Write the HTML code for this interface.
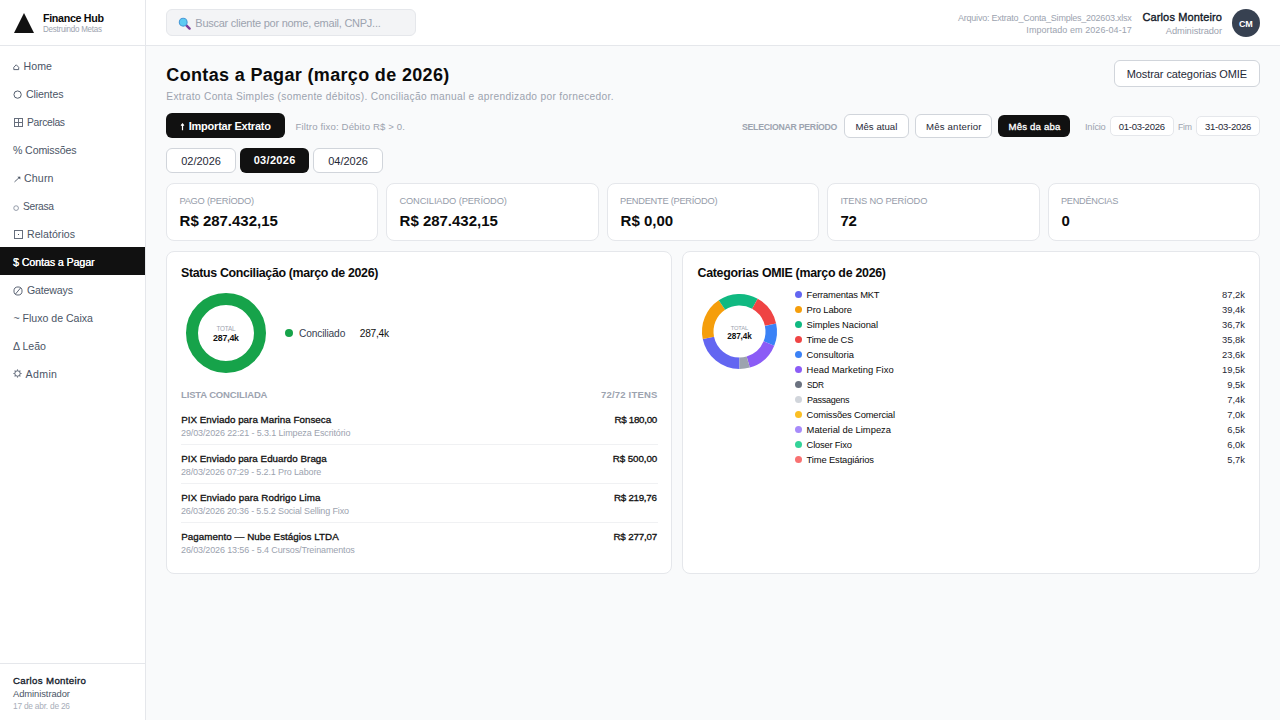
<!DOCTYPE html>
<html lang="pt-BR"><head><meta charset="utf-8"><title>Finance Hub</title>
<style>
html,body{margin:0;padding:0}
body{width:1280px;height:720px;overflow:hidden;background:#f9fafb;font-family:"Liberation Sans", sans-serif;position:relative;-webkit-font-smoothing:antialiased}
.b{position:absolute;box-sizing:border-box}
.t{position:absolute;white-space:nowrap;line-height:1.2;margin:0;padding:0}
svg{position:absolute;overflow:visible}
</style></head><body>
<div class="b" style="left:0px;top:0px;width:145px;height:720px;background:#fff;"></div>
<div class="b" style="left:146px;top:0px;width:1134px;height:45px;background:#fff;"></div>
<div class="b" style="left:145px;top:0px;width:1px;height:720px;background:#e5e7eb;"></div>
<div class="b" style="left:0px;top:45px;width:1280px;height:1px;background:#e5e7eb;"></div>
<div class="b" style="left:0px;top:663px;width:145px;height:1px;background:#e5e7eb;"></div>
<svg style="left:14px;top:13px" width="20" height="20" viewBox="0 0 20 20"><path d="M10 0 L20 20 L0 20 Z" fill="#111"/></svg>
<div class="b" style="left:0px;top:247px;width:145px;height:28px;background:#111;"></div>
<svg style="left:13px;top:63.6px" width="7" height="7" viewBox="0 0 7 7" fill="none" stroke="#4b5566" stroke-width="1"><path d="M0.8 5.6 V3.3 L3.25 0.8 L5.7 3.3 V5.6 Z" stroke-width="0.9"/></svg>
<svg style="left:13px;top:89.7px" width="10" height="10" viewBox="0 0 10 10" fill="none" stroke="#4b5566" stroke-width="1"><circle cx="4.6" cy="4.6" r="3.65" stroke-width="0.95"/></svg>
<svg style="left:14px;top:118px" width="9" height="9" viewBox="0 0 9 9" fill="none" stroke="#666e7c" stroke-width="1" shape-rendering="crispEdges"><rect x="0.5" y="0.5" width="8" height="8"/><path d="M4.5 0V9M0 4.5H9"/></svg>
<svg style="left:13.5px;top:175.8px" width="7" height="7" viewBox="0 0 7 7" fill="none" stroke="#4b5566" stroke-width="1"><path d="M0.5 5.9 L5.6 1.2" stroke-width="0.9"/><path d="M3.4 0.7 H6.3 V3.6 Z" fill="#4b5563" stroke="none"/></svg>
<svg style="left:13px;top:204.5px" width="7" height="7" viewBox="0 0 7 7" fill="none" stroke="#7b8494" stroke-width="1"><circle cx="3.1" cy="3.1" r="2.35" stroke-width="0.8"/></svg>
<svg style="left:14px;top:230px" width="9" height="9" viewBox="0 0 9 9" fill="none" stroke="#666e7c" stroke-width="1" shape-rendering="crispEdges"><rect x="0.5" y="0.5" width="8" height="8"/><rect x="4" y="4" width="1" height="1" fill="#4b5563" stroke="none"/></svg>
<svg style="left:13.4px;top:285.6px" width="10" height="10" viewBox="0 0 10 10" fill="none" stroke="#4b5566" stroke-width="1"><circle cx="5" cy="5" r="4.05" stroke-width="0.9"/><path d="M2.5 8 L7.5 2" stroke-width="0.9"/></svg>
<svg style="left:13.2px;top:369.3px" width="9" height="9" viewBox="0 0 9 9" fill="none" stroke="#4b5566" stroke-width="1"><circle cx="4.5" cy="4.5" r="2.7" stroke-width="0.9"/><path d="M7.50 4.50L8.50 4.50M6.62 6.62L7.33 7.33M4.50 7.50L4.50 8.50M2.38 6.62L1.67 7.33M1.50 4.50L0.50 4.50M2.38 2.38L1.67 1.67M4.50 1.50L4.50 0.50M6.62 2.38L7.33 1.67" stroke-width="1.1"/></svg>
<div class="b" style="left:166px;top:9px;width:250px;height:27px;background:#f3f4f6;border:1px solid #e5e7eb;border-radius:6px;"></div>
<svg style="left:178.4px;top:16.8px" width="13" height="13" viewBox="0 0 13 13"><path d="M7.6 7.6 L11.6 11.6" stroke="#7d3c98" stroke-width="2.4" stroke-linecap="round"/><circle cx="5.2" cy="5.2" r="3.9" fill="#5ecbf2" stroke="#4a9ad8" stroke-width="1.1"/></svg>
<div class="b" style="left:1232px;top:9px;width:28px;height:28px;background:#374151;border-radius:14px;"></div>
<div class="b" style="left:1114px;top:60px;width:146px;height:27px;background:#fff;border:1px solid #d1d5db;border-radius:6px;"></div>
<div class="b" style="left:166px;top:113px;width:119px;height:25px;background:#111;border-radius:6px;"></div>
<svg style="left:180.2px;top:122.8px" width="5" height="8" viewBox="0 0 5 8"><path d="M2.5 7.3 V1 M1.1 2.7 L2.5 0.9 L3.9 2.7" fill="none" stroke="#fff" stroke-width="1.2"/></svg>
<div class="b" style="left:844px;top:114px;width:64.5px;height:24px;background:#fff;border:1px solid #d1d5db;border-radius:6px;"></div>
<div class="b" style="left:915px;top:114px;width:77px;height:24px;background:#fff;border:1px solid #d1d5db;border-radius:6px;"></div>
<div class="b" style="left:998px;top:115px;width:72px;height:22px;background:#111;border-radius:6px;"></div>
<div class="b" style="left:1110px;top:116px;width:63.5px;height:20px;background:#fff;border:1px solid #e5e7eb;border-radius:5px;"></div>
<div class="b" style="left:1196px;top:116px;width:63.5px;height:20px;background:#fff;border:1px solid #e5e7eb;border-radius:5px;"></div>
<div class="b" style="left:166px;top:148px;width:70px;height:25px;background:#fff;border:1px solid #d1d5db;border-radius:6px;"></div>
<div class="b" style="left:240px;top:148px;width:69px;height:25px;background:#111;border-radius:6px;"></div>
<div class="b" style="left:313px;top:148px;width:70px;height:25px;background:#fff;border:1px solid #d1d5db;border-radius:6px;"></div>
<div class="b" style="left:166px;top:183px;width:212px;height:58px;background:#fff;border:1px solid #e5e7eb;border-radius:8px;"></div>
<div class="b" style="left:386px;top:183px;width:213px;height:58px;background:#fff;border:1px solid #e5e7eb;border-radius:8px;"></div>
<div class="b" style="left:607px;top:183px;width:212px;height:58px;background:#fff;border:1px solid #e5e7eb;border-radius:8px;"></div>
<div class="b" style="left:827px;top:183px;width:213px;height:58px;background:#fff;border:1px solid #e5e7eb;border-radius:8px;"></div>
<div class="b" style="left:1048px;top:183px;width:212px;height:58px;background:#fff;border:1px solid #e5e7eb;border-radius:8px;"></div>
<div class="b" style="left:166px;top:251px;width:506px;height:323px;background:#fff;border:1px solid #e5e7eb;border-radius:8px;"></div>
<div class="b" style="left:682px;top:251px;width:578px;height:323px;background:#fff;border:1px solid #e5e7eb;border-radius:8px;"></div>
<svg style="left:186px;top:293px" width="80" height="80" viewBox="0 0 80 80"><circle cx="40" cy="40" r="34" fill="none" stroke="#16a34a" stroke-width="12"/><text x="40" y="38" text-anchor="middle" font-family="Liberation Sans, sans-serif" font-size="6.3" textLength="19" fill="#9ca3af">TOTAL</text><text x="40" y="48" text-anchor="middle" font-family="Liberation Sans, sans-serif" font-size="8.8" textLength="26" font-weight="700" fill="#111">287,4k</text></svg>
<div class="b" style="left:285px;top:329px;width:8px;height:8px;background:#16a34a;border-radius:4px;"></div>
<div class="b" style="left:181px;top:444px;width:476.5px;height:1px;background:#f0f1f3;"></div>
<div class="b" style="left:181px;top:483px;width:476.5px;height:1px;background:#f0f1f3;"></div>
<div class="b" style="left:181px;top:522px;width:476.5px;height:1px;background:#f0f1f3;"></div>
<svg style="left:702.3px;top:293.6px" width="75" height="75" viewBox="0 0 75 75"><path d="M37.50 69.25 A31.75 31.75 0 0 1 6.40 43.88" fill="none" stroke="#6366f1" stroke-width="11.5"/><path d="M6.40 43.88 A31.75 31.75 0 0 1 19.93 11.05" fill="none" stroke="#f59e0b" stroke-width="11.5"/><path d="M19.93 11.05 A31.75 31.75 0 0 1 52.89 9.73" fill="none" stroke="#10b981" stroke-width="11.5"/><path d="M52.89 9.73 A31.75 31.75 0 0 1 68.50 30.63" fill="none" stroke="#ef4444" stroke-width="11.5"/><path d="M68.50 30.63 A31.75 31.75 0 0 1 66.90 49.50" fill="none" stroke="#3b82f6" stroke-width="11.5"/><path d="M66.90 49.50 A31.75 31.75 0 0 1 46.25 68.02" fill="none" stroke="#8b5cf6" stroke-width="11.5"/><path d="M46.25 68.02 A31.75 31.75 0 0 1 37.50 69.25" fill="none" stroke="#9ca3af" stroke-width="11.5"/><text x="37.5" y="35.6" text-anchor="middle" font-family="Liberation Sans, sans-serif" font-size="5.8" textLength="17.5" fill="#9ca3af">TOTAL</text><text x="37.5" y="44.6" text-anchor="middle" font-family="Liberation Sans, sans-serif" font-size="8.2" textLength="24.5" font-weight="700" fill="#111">287,4k</text></svg>
<div class="b" style="left:795px;top:291px;width:7px;height:7px;background:#6366f1;border-radius:3.5px;"></div>
<div class="b" style="left:795px;top:306px;width:7px;height:7px;background:#f59e0b;border-radius:3.5px;"></div>
<div class="b" style="left:795px;top:321px;width:7px;height:7px;background:#10b981;border-radius:3.5px;"></div>
<div class="b" style="left:795px;top:336px;width:7px;height:7px;background:#ef4444;border-radius:3.5px;"></div>
<div class="b" style="left:795px;top:351px;width:7px;height:7px;background:#3b82f6;border-radius:3.5px;"></div>
<div class="b" style="left:795px;top:366px;width:7px;height:7px;background:#8b5cf6;border-radius:3.5px;"></div>
<div class="b" style="left:795px;top:381px;width:7px;height:7px;background:#6b7280;border-radius:3.5px;"></div>
<div class="b" style="left:795px;top:396px;width:7px;height:7px;background:#d1d5db;border-radius:3.5px;"></div>
<div class="b" style="left:795px;top:411px;width:7px;height:7px;background:#fbbf24;border-radius:3.5px;"></div>
<div class="b" style="left:795px;top:426px;width:7px;height:7px;background:#a78bfa;border-radius:3.5px;"></div>
<div class="b" style="left:795px;top:441px;width:7px;height:7px;background:#34d399;border-radius:3.5px;"></div>
<div class="b" style="left:795px;top:456px;width:7px;height:7px;background:#f87171;border-radius:3.5px;"></div>
<span class="t" style="top:12.20px;font-size:11.3px;color:#0b0b0b;font-weight:700;letter-spacing:-0.339px;left:43.00px;transform:scaleX(0.9471);transform-origin:0 0;">Finance Hub</span>
<span class="t" style="top:24.00px;font-size:8.6px;color:#9ca3af;letter-spacing:-0.258px;left:43.00px;transform:scaleX(0.9293);transform-origin:0 0;">Destruindo Metas</span>
<span class="t" style="top:60.00px;font-size:10.6px;color:#4b5566;letter-spacing:0.078px;left:23.50px;font-weight:400;">Home</span>
<span class="t" style="top:88.00px;font-size:10.6px;color:#4b5566;letter-spacing:-0.112px;left:26.00px;font-weight:400;">Clientes</span>
<span class="t" style="top:116.00px;font-size:10.6px;color:#4b5566;letter-spacing:-0.318px;left:27.00px;transform:scaleX(0.9745);transform-origin:0 0;font-weight:400;">Parcelas</span>
<span class="t" style="top:144.00px;font-size:10.6px;color:#4b5566;letter-spacing:-0.127px;left:13.00px;font-weight:400;">% Comissões</span>
<span class="t" style="top:172.00px;font-size:10.6px;color:#4b5566;letter-spacing:0.160px;left:24.00px;font-weight:400;">Churn</span>
<span class="t" style="top:200.00px;font-size:10.6px;color:#4b5566;letter-spacing:-0.318px;left:22.50px;transform:scaleX(0.9691);transform-origin:0 0;font-weight:400;">Serasa</span>
<span class="t" style="top:228.00px;font-size:10.6px;color:#4b5566;letter-spacing:0.033px;left:27.00px;font-weight:400;">Relatórios</span>
<span class="t" style="top:256.00px;font-size:10.6px;color:#fff;letter-spacing:-0.064px;left:13.00px;text-shadow:0.3px 0 0 #fff;">$ Contas a Pagar</span>
<span class="t" style="top:284.00px;font-size:10.6px;color:#4b5566;letter-spacing:-0.158px;left:27.00px;font-weight:400;">Gateways</span>
<span class="t" style="top:312.00px;font-size:10.6px;color:#4b5566;letter-spacing:-0.020px;left:13.50px;font-weight:400;">~ Fluxo de Caixa</span>
<span class="t" style="top:340.00px;font-size:10.6px;color:#4b5566;letter-spacing:-0.003px;left:13.00px;font-weight:400;">Δ Leão</span>
<span class="t" style="top:368.00px;font-size:10.6px;color:#4b5566;letter-spacing:0.367px;left:25.50px;font-weight:400;">Admin</span>
<span class="t" style="top:675.00px;font-size:9.7px;color:#111827;-webkit-text-stroke:0.31px #111827;letter-spacing:0.329px;left:13.00px;">Carlos Monteiro</span>
<span class="t" style="top:688.00px;font-size:9.4px;color:#4b5566;letter-spacing:-0.070px;left:13.00px;">Administrador</span>
<span class="t" style="top:701.00px;font-size:8.4px;color:#a8aeb9;letter-spacing:-0.236px;left:13.00px;">17 de abr. de 26</span>
<span class="t" style="top:17.00px;font-size:11px;color:#9ca3af;letter-spacing:-0.251px;left:195.30px;">Buscar cliente por nome, email, CNPJ...</span>
<span class="t" style="top:13.00px;font-size:9px;color:#9ca3af;letter-spacing:-0.227px;right:148.43px;">Arquivo: Extrato_Conta_Simples_202603.xlsx</span>
<span class="t" style="top:25.00px;font-size:9px;color:#9ca3af;letter-spacing:0.065px;right:148.13px;">Importado em 2026-04-17</span>
<span class="t" style="top:11.00px;font-size:11px;color:#111827;-webkit-text-stroke:0.35px #111827;letter-spacing:0.140px;right:57.86px;">Carlos Monteiro</span>
<span class="t" style="top:26.00px;font-size:9.3px;color:#9ca3af;letter-spacing:-0.097px;right:58.10px;">Administrador</span>
<span class="t" style="top:19.00px;font-size:9px;color:#fff;font-weight:700;letter-spacing:-0.200px;left:1238.90px;">CM</span>
<span class="t" style="top:65.00px;font-size:18px;color:#0b0b0b;font-weight:700;letter-spacing:0.341px;left:166.30px;">Contas a Pagar (março de 2026)</span>
<span class="t" style="top:91.00px;font-size:10.2px;color:#9ca3af;letter-spacing:0.320px;left:166.30px;">Extrato Conta Simples (somente débitos). Conciliação manual e aprendizado por fornecedor.</span>
<span class="t" style="top:68.00px;font-size:11px;color:#1f2937;letter-spacing:-0.080px;left:1126.70px;">Mostrar categorias OMIE</span>
<span class="t" style="top:120.00px;font-size:11px;color:#fff;font-weight:700;letter-spacing:-0.219px;left:188.70px;">Importar Extrato</span>
<span class="t" style="top:121.00px;font-size:9.6px;color:#9ca3af;letter-spacing:0.141px;left:295.50px;">Filtro fixo: Débito R$ &gt; 0.</span>
<span class="t" style="top:121.00px;font-size:9.4px;color:#9ca3af;font-weight:700;letter-spacing:-0.282px;left:742.10px;transform:scaleX(0.9306);transform-origin:0 0;">SELECIONAR PERÍODO</span>
<span class="t" style="top:121.00px;font-size:9.6px;color:#1f2937;letter-spacing:0.051px;left:855.40px;">Mês atual</span>
<span class="t" style="top:121.00px;font-size:9.6px;color:#1f2937;letter-spacing:0.197px;left:926.00px;">Mês anterior</span>
<span class="t" style="top:121.00px;font-size:9.6px;color:#fff;-webkit-text-stroke:0.31px #fff;letter-spacing:0.195px;left:1008.50px;">Mês da aba</span>
<span class="t" style="top:121.00px;font-size:9.4px;color:#9ca3af;letter-spacing:-0.282px;left:1084.60px;transform:scaleX(0.9899);transform-origin:0 0;">Início</span>
<span class="t" style="top:121.00px;font-size:9.5px;color:#1f2937;letter-spacing:-0.257px;left:1118.70px;">01-03-2026</span>
<span class="t" style="top:121.00px;font-size:9.4px;color:#9ca3af;letter-spacing:-0.282px;left:1178.10px;transform:scaleX(0.9296);transform-origin:0 0;">Fim</span>
<span class="t" style="top:121.00px;font-size:9.5px;color:#1f2937;letter-spacing:-0.245px;left:1205.00px;">31-03-2026</span>
<span class="t" style="top:155.00px;font-size:11px;color:#1f2937;letter-spacing:0.006px;left:181.20px;">02/2026</span>
<span class="t" style="top:154.00px;font-size:11px;color:#fff;font-weight:700;letter-spacing:0.306px;left:253.70px;">03/2026</span>
<span class="t" style="top:155.00px;font-size:11px;color:#1f2937;letter-spacing:0.006px;left:328.20px;">04/2026</span>
<span class="t" style="top:196.00px;font-size:9.3px;color:#959ca9;letter-spacing:-0.248px;left:179.40px;">PAGO (PERÍODO)</span>
<span class="t" style="top:212.00px;font-size:15px;color:#0b0b0b;font-weight:700;letter-spacing:-0.018px;left:179.60px;">R$ 287.432,15</span>
<span class="t" style="top:196.00px;font-size:9.3px;color:#959ca9;letter-spacing:-0.106px;left:399.40px;">CONCILIADO (PERÍODO)</span>
<span class="t" style="top:212.00px;font-size:15px;color:#0b0b0b;font-weight:700;letter-spacing:-0.018px;left:399.60px;">R$ 287.432,15</span>
<span class="t" style="top:196.00px;font-size:9.3px;color:#959ca9;letter-spacing:-0.279px;left:620.40px;transform:scaleX(0.9996);transform-origin:0 0;">PENDENTE (PERÍODO)</span>
<span class="t" style="top:212.00px;font-size:15px;color:#0b0b0b;font-weight:700;letter-spacing:-0.008px;left:620.60px;">R$ 0,00</span>
<span class="t" style="top:196.00px;font-size:9.3px;color:#959ca9;letter-spacing:-0.158px;left:840.40px;">ITENS NO PERÍODO</span>
<span class="t" style="top:212.00px;font-size:15px;color:#0b0b0b;font-weight:700;letter-spacing:-0.388px;left:840.60px;">72</span>
<span class="t" style="top:196.00px;font-size:9.3px;color:#959ca9;letter-spacing:-0.279px;left:1061.40px;transform:scaleX(0.9889);transform-origin:0 0;">PENDÊNCIAS</span>
<span class="t" style="top:212.00px;font-size:15px;color:#0b0b0b;font-weight:700;letter-spacing:0.056px;left:1061.60px;">0</span>
<span class="t" style="top:266.00px;font-size:12.4px;color:#0b0b0b;font-weight:700;letter-spacing:-0.344px;left:181.00px;">Status Conciliação (março de 2026)</span>
<span class="t" style="top:266.00px;font-size:12.4px;color:#0b0b0b;font-weight:700;letter-spacing:-0.282px;left:697.50px;">Categorias OMIE (março de 2026)</span>
<span class="t" style="top:328.00px;font-size:10.2px;color:#374151;letter-spacing:-0.142px;left:299.00px;">Conciliado</span>
<span class="t" style="top:328.00px;font-size:10.2px;color:#111;letter-spacing:-0.279px;left:359.80px;">287,4k</span>
<span class="t" style="top:389.00px;font-size:9.5px;color:#9ca3af;font-weight:700;letter-spacing:-0.145px;left:181.00px;">LISTA CONCILIADA</span>
<span class="t" style="top:389.00px;font-size:9.5px;color:#9ca3af;font-weight:700;letter-spacing:0.191px;right:622.51px;">72/72 ITENS</span>
<span class="t" style="top:414.00px;font-size:9.8px;color:#111;-webkit-text-stroke:0.31px #111;letter-spacing:0.026px;left:181.20px;">PIX Enviado para Marina Fonseca</span>
<span class="t" style="top:428.00px;font-size:9px;color:#9ca3af;letter-spacing:-0.124px;left:181.00px;">29/03/2026 22:21 - 5.3.1 Limpeza Escritório</span>
<span class="t" style="top:414.00px;font-size:9.8px;color:#111;-webkit-text-stroke:0.31px #111;letter-spacing:-0.290px;right:622.99px;">R$ 180,00</span>
<span class="t" style="top:453.00px;font-size:9.8px;color:#111;-webkit-text-stroke:0.31px #111;letter-spacing:0.025px;left:181.20px;">PIX Enviado para Eduardo Braga</span>
<span class="t" style="top:467.00px;font-size:9px;color:#9ca3af;letter-spacing:-0.142px;left:181.00px;">28/03/2026 07:29 - 5.2.1 Pro Labore</span>
<span class="t" style="top:453.00px;font-size:9.8px;color:#111;-webkit-text-stroke:0.31px #111;letter-spacing:-0.077px;right:622.78px;">R$ 500,00</span>
<span class="t" style="top:492.00px;font-size:9.8px;color:#111;-webkit-text-stroke:0.31px #111;letter-spacing:0.070px;left:181.20px;">PIX Enviado para Rodrigo Lima</span>
<span class="t" style="top:506.00px;font-size:9px;color:#9ca3af;letter-spacing:-0.142px;left:181.00px;">26/03/2026 20:36 - 5.5.2 Social Selling Fixo</span>
<span class="t" style="top:492.00px;font-size:9.8px;color:#111;-webkit-text-stroke:0.31px #111;letter-spacing:-0.294px;right:622.99px;transform:scaleX(0.9984);transform-origin:100% 0;">R$ 219,76</span>
<span class="t" style="top:531.00px;font-size:9.8px;color:#111;-webkit-text-stroke:0.31px #111;letter-spacing:0.051px;left:181.20px;">Pagamento — Nube Estágios LTDA</span>
<span class="t" style="top:545.00px;font-size:9px;color:#9ca3af;letter-spacing:-0.121px;left:181.00px;">26/03/2026 13:56 - 5.4 Cursos/Treinamentos</span>
<span class="t" style="top:531.00px;font-size:9.8px;color:#111;-webkit-text-stroke:0.31px #111;letter-spacing:-0.165px;right:622.86px;">R$ 277,07</span>
<span class="t" style="top:289.00px;font-size:9.4px;color:#0b0b0b;letter-spacing:-0.182px;left:806.60px;">Ferramentas MKT</span>
<span class="t" style="top:289.00px;font-size:9.4px;color:#1f2937;letter-spacing:-0.009px;right:35.01px;">87,2k</span>
<span class="t" style="top:304.00px;font-size:9.4px;color:#0b0b0b;letter-spacing:-0.121px;left:806.60px;">Pro Labore</span>
<span class="t" style="top:304.00px;font-size:9.4px;color:#1f2937;letter-spacing:-0.009px;right:35.01px;">39,4k</span>
<span class="t" style="top:319.00px;font-size:9.4px;color:#0b0b0b;letter-spacing:-0.062px;left:806.60px;">Simples Nacional</span>
<span class="t" style="top:319.00px;font-size:9.4px;color:#1f2937;letter-spacing:-0.009px;right:35.01px;">36,7k</span>
<span class="t" style="top:334.00px;font-size:9.4px;color:#0b0b0b;letter-spacing:-0.262px;left:806.60px;">Time de CS</span>
<span class="t" style="top:334.00px;font-size:9.4px;color:#1f2937;letter-spacing:-0.009px;right:35.01px;">35,8k</span>
<span class="t" style="top:349.00px;font-size:9.4px;color:#0b0b0b;letter-spacing:-0.002px;left:806.60px;">Consultoria</span>
<span class="t" style="top:349.00px;font-size:9.4px;color:#1f2937;letter-spacing:-0.009px;right:35.01px;">23,6k</span>
<span class="t" style="top:364.00px;font-size:9.4px;color:#0b0b0b;letter-spacing:0.028px;left:806.60px;">Head Marketing Fixo</span>
<span class="t" style="top:364.00px;font-size:9.4px;color:#1f2937;letter-spacing:-0.009px;right:35.01px;">19,5k</span>
<span class="t" style="top:379.00px;font-size:9.4px;color:#0b0b0b;letter-spacing:-0.282px;left:806.60px;transform:scaleX(0.8839);transform-origin:0 0;">SDR</span>
<span class="t" style="top:379.00px;font-size:9.4px;color:#1f2937;right:35.00px;">9,5k</span>
<span class="t" style="top:394.00px;font-size:9.4px;color:#0b0b0b;letter-spacing:-0.282px;left:806.60px;transform:scaleX(0.9607);transform-origin:0 0;">Passagens</span>
<span class="t" style="top:394.00px;font-size:9.4px;color:#1f2937;right:35.00px;">7,4k</span>
<span class="t" style="top:409.00px;font-size:9.4px;color:#0b0b0b;letter-spacing:-0.154px;left:806.60px;">Comissões Comercial</span>
<span class="t" style="top:409.00px;font-size:9.4px;color:#1f2937;right:35.00px;">7,0k</span>
<span class="t" style="top:424.00px;font-size:9.4px;color:#0b0b0b;letter-spacing:-0.001px;left:806.60px;">Material de Limpeza</span>
<span class="t" style="top:424.00px;font-size:9.4px;color:#1f2937;right:35.00px;">6,5k</span>
<span class="t" style="top:439.00px;font-size:9.4px;color:#0b0b0b;letter-spacing:-0.211px;left:806.60px;">Closer Fixo</span>
<span class="t" style="top:439.00px;font-size:9.4px;color:#1f2937;right:35.00px;">6,0k</span>
<span class="t" style="top:454.00px;font-size:9.4px;color:#0b0b0b;letter-spacing:-0.138px;left:806.60px;">Time Estagiários</span>
<span class="t" style="top:454.00px;font-size:9.4px;color:#1f2937;right:35.00px;">5,7k</span>
</body></html>
